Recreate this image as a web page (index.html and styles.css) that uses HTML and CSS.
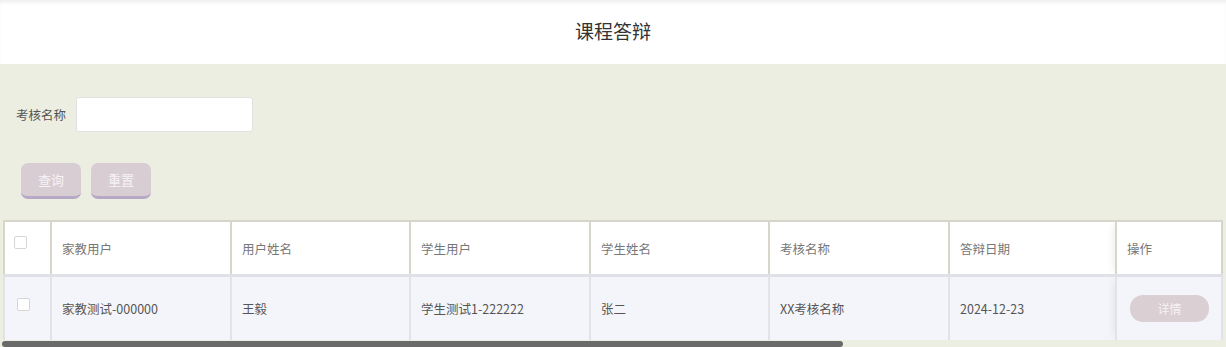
FILE: index.html
```html
<!DOCTYPE html>
<html lang="zh-CN">
<head>
  <meta charset="UTF-8">
  <title>课程答辩</title>
  <link rel="stylesheet" href="styles.css">
</head>
<body>
  <div class="page-header">
    <h1 class="page-title">课程答辩</h1>
  </div>

  <div class="main">
    <form class="search-form">
      <div class="search-row">
        <label class="search-label" for="examName">考核名称</label>
        <input class="search-input" type="text" id="examName">
      </div>
      <div class="btn-row">
        <button type="button" class="btn">查询</button>
        <button type="button" class="btn">重置</button>
      </div>
    </form>

    <div class="table-wrap">
      <table class="data-table">
        <colgroup>
          <col class="col-check">
          <col class="col-a"><col class="col-b"><col class="col-a">
          <col class="col-b"><col class="col-a">
          <col class="col-date">
          <col class="col-op">
        </colgroup>
        <thead>
          <tr>
            <th class="cell-check"><span class="checkbox"></span></th>
            <th>家教用户</th>
            <th>用户姓名</th>
            <th>学生用户</th>
            <th>学生姓名</th>
            <th>考核名称</th>
            <th>答辩日期</th>
            <th class="cell-op">操作</th>
          </tr>
        </thead>
        <tbody>
          <tr>
            <td class="cell-check"><span class="checkbox body-check"></span></td>
            <td>家教测试-000000</td>
            <td>王毅</td>
            <td>学生测试1-222222</td>
            <td>张二</td>
            <td>XX考核名称</td>
            <td>2024-12-23</td>
            <td class="cell-op"><button type="button" class="btn-detail">详情</button></td>
          </tr>
        </tbody>
      </table>
      <div class="scrollbar"></div>
    </div>
  </div>
</body>
</html>
```

FILE: styles.css
```css
body {
  margin: 0; padding: 0;
  font-family: "Microsoft YaHei", "Noto Sans CJK SC", sans-serif;
  background: #eceee1;
  color: #555;
  overflow: hidden;
}
.page-header {
  height: 64px; background: #fff;
  box-shadow: inset 0 4px 4px -2px rgba(0,0,0,0.08);
  display: flex; align-items: center; justify-content: center;
}
.page-title { margin: 0 0 4px; font-size: 19px; font-weight: 400; color: #333; }

.search-form { padding: 33px 0 0 16px; }
.search-row { display: flex; align-items: center; gap: 10px; }
.search-label { font-size: 12.5px; color: #555; }
.search-input {
  width: 177px; height: 35px; box-sizing: border-box;
  border: 1px solid #e2e2e2; border-radius: 3px; background: #fff;
  outline: none;
}
.btn-row { display: flex; gap: 10px; padding: 31px 0 0 5px; }
.btn {
  width: 60px; height: 36px; box-sizing: border-box;
  border: none; border-bottom: 3px solid #b5a9c6; border-radius: 7px;
  background: #d9cdd4; color: #f6f2f5;
  font-family: inherit; font-size: 13px; padding: 0;
}

.table-wrap { margin: 21px 4px 0 3px; }
.data-table {
  width: 1218px; table-layout: fixed; border-collapse: collapse;
  font-size: 12.5px;
}
.col-check { width: 47px; }
.col-a { width: 180px; }
.col-b { width: 179px; }
.col-date { width: 167px; }
.col-op { width: 106px; }
.data-table th {
  height: 52px; background: #fff; color: #777; font-weight: 400;
  text-align: left; padding: 0 0 0 10px;
  border: 2px solid #d8d6c8; border-bottom: 3px solid #dfe1e6;
}
.data-table td {
  height: 63px; background: #f4f5fa; color: #555;
  padding: 0 0 0 10px;
  border: 2px solid #e2e3e7; border-top: none; border-bottom: none;
}
.data-table th.cell-check, .data-table td.cell-check { padding: 0; vertical-align: top; }
.checkbox {
  display: block; width: 11px; height: 11px; margin: 14px 0 0 9px;
  border: 1px solid #d6d6d6; border-radius: 2px; background: #fff;
}
.body-check { margin: 21px 0 0 12px; }
.cell-op { box-shadow: -6px 0 8px -4px rgba(0,0,0,0.08); }
.data-table th.cell-op { border-left: none; }
.data-table td.cell-op { border-left: none; padding-left: 13px; }
.btn-detail {
  width: 79px; height: 27px; border: none; border-radius: 13px;
  background: #dacfd3; color: #f6f2f4;
  font-family: inherit; font-size: 12px; padding: 0;
}
.scrollbar {
  width: 841px; height: 6px; margin: 1px 0 0 -1px;
  background: #6a6a6a; border-radius: 3px;
}
```
